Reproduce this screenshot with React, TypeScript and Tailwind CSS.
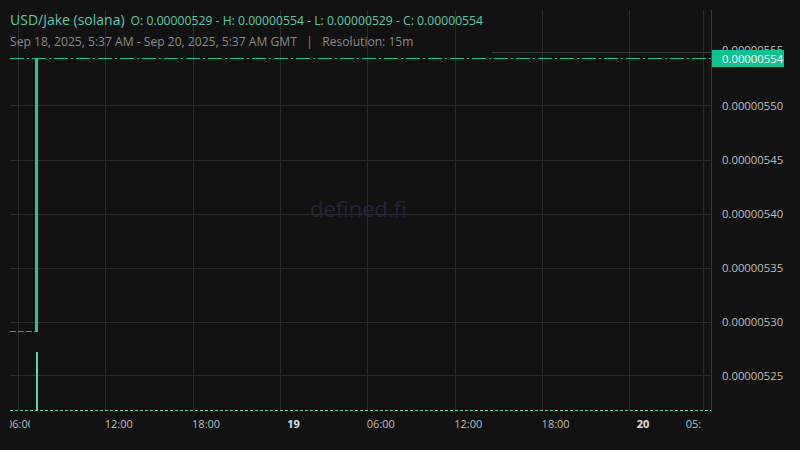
export default function App() {
  const vx = [18, 105, 193, 280, 367, 455, 542, 629, 703];
  const hy = [105, 160, 214, 268, 322, 375];
  const prices = ["0.00000550", "0.00000545", "0.00000540", "0.00000535", "0.00000530", "0.00000525"];
  const times: [string, boolean][] = [
    ["12:00", false], ["18:00", false], ["19", true], ["06:00", false],
    ["12:00", false], ["18:00", false], ["20", true],
  ];
  return (
    <div className="relative w-[800px] h-[450px] bg-[#121212] overflow-hidden" style={{ fontFamily: '"Open Sans", "Noto Sans", sans-serif' }}>
      <svg className="absolute inset-0" width="800" height="450">
        {vx.map((x) => <line key={x} x1={x + 0.5} y1={10} x2={x + 0.5} y2={410} stroke="#2c2c2c" />)}
        {hy.map((y) => <line key={y} x1={10} y1={y + 0.5} x2={711} y2={y + 0.5} stroke="#2c2c2c" />)}
        <line x1={492} y1={52.5} x2={711} y2={52.5} stroke="#3a3a3a" />
        <line x1={711.5} y1={10} x2={711.5} y2={412} stroke="#3a3a3a" />
        <line x1={10} y1={58.5} x2={711} y2={58.5} stroke="#14c08f" strokeDasharray="14 3 2 3" />
        <line x1={10} y1={331.5} x2={36} y2={331.5} stroke="#14a584" strokeDasharray="6 2" />
        <rect x={35} y={58} width={3} height={274} fill="#1fc79a" />
        <rect x={36} y={352} width={2} height={58} fill="#59d6b0" />
        <line x1={10} y1={410.5} x2={711} y2={410.5} stroke="#5fcfae" strokeDasharray="3 2" />
      </svg>

      <div className="absolute left-[10px] top-[9px] flex flex-col gap-[3px]">
        <div className="flex items-baseline gap-[6px] text-[#5fc9a8]">
          <span className="text-[14px]">USD/Jake (solana)</span>
          <span className="text-[12.2px]">O: 0.00000529 - H: 0.00000554 - L: 0.00000529 - C: 0.00000554</span>
        </div>
        <div className="text-[12.1px] text-[#8a8a8a]">
          Sep 18, 2025, 5:37 AM - Sep 20, 2025, 5:37 AM GMT &nbsp;&nbsp;|&nbsp;&nbsp; Resolution: 15m
        </div>
      </div>

      <div className="absolute left-[310px] top-[192px] text-[22px] text-[#23243d]">defined.fi</div>

      <div className="absolute left-[712px] top-0 h-[410px] w-[88px]">
        <div className="absolute left-[10px] top-[42px] text-[11.3px] text-[#bdbdbd]">0.00000555</div>
        <div className="absolute left-0 top-[50px] h-[17px] w-[72px] bg-[#10c28f] text-white text-[11.3px] leading-[17px] pl-[10px]">0.00000554</div>
        <div className="flex flex-col gap-[37px] pl-[10px] pt-[97px]">
          {prices.map((p) => (
            <div key={p} className="text-[11.3px] text-[#bdbdbd] leading-[17px]">{p}</div>
          ))}
        </div>
      </div>

      <div className="absolute left-[10px] top-[416px] w-[701px] flex text-[11px] text-[#bdbdbd] leading-[16px] overflow-hidden">
        <div className="w-[20px] overflow-hidden shrink-0"><span className="ml-[-4px]">06:00</span></div>
        <div className="flex ml-[45px]">
          {times.map(([t, b], i) => (
            <div key={i} className={`w-[87.4px] shrink-0 text-center ${b ? "font-bold text-[#e0e0e0]" : ""}`}>{t}</div>
          ))}
        </div>
        <div className="ml-[-1px] w-[16px] overflow-hidden shrink-0">05:37</div>
      </div>
    </div>
  );
}
